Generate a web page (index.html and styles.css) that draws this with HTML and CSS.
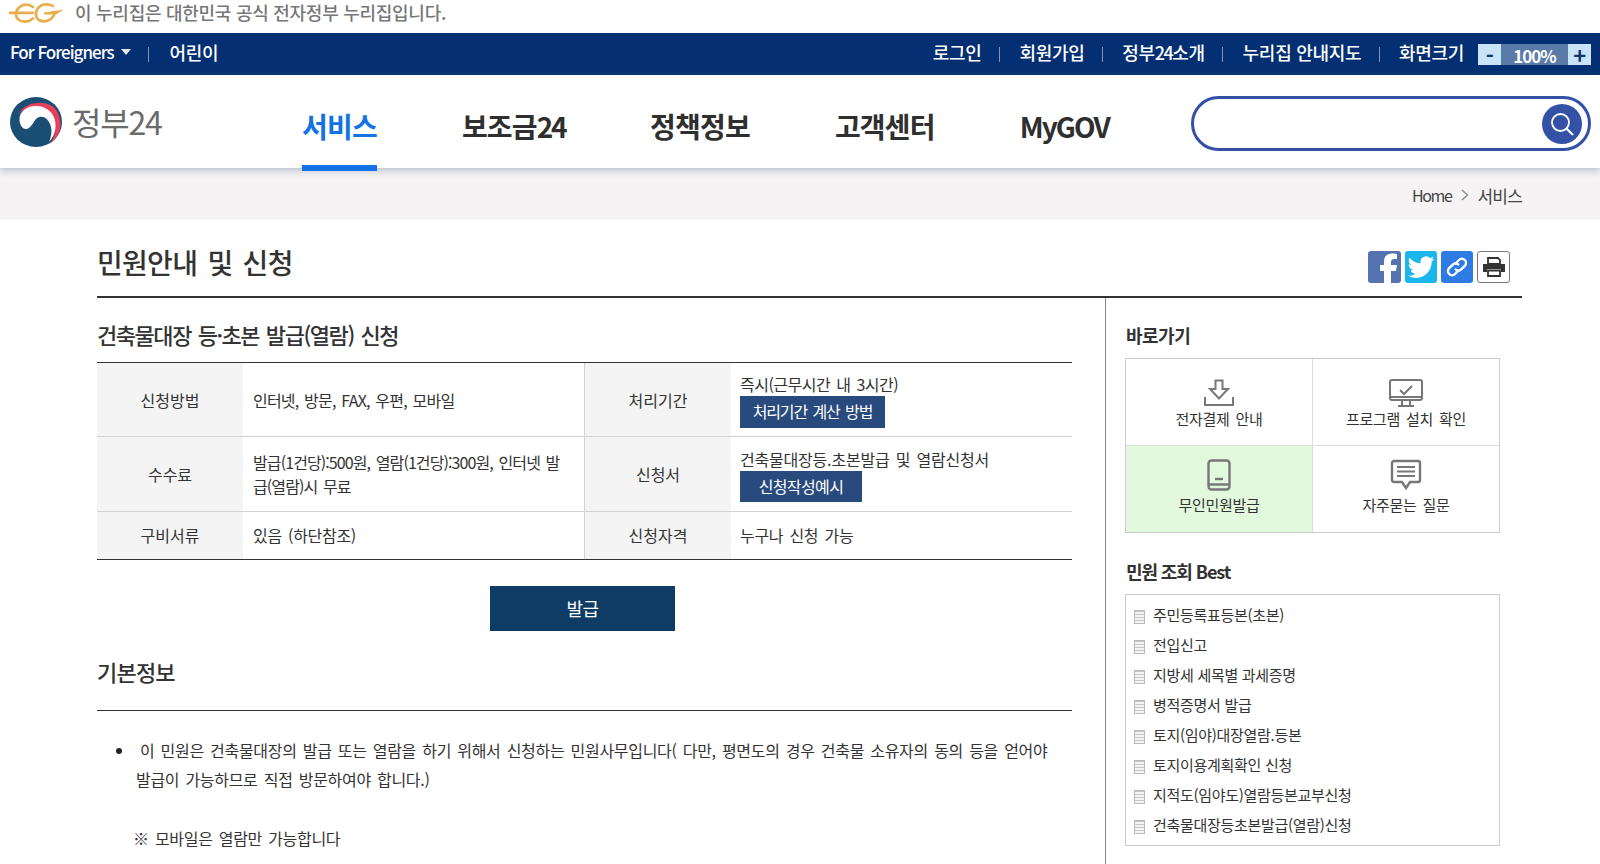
FILE: index.html
```html
<!DOCTYPE html>
<html lang="ko">
<head>
<meta charset="utf-8">
<title>정부24</title>
<link rel="stylesheet" href="styles.css">
</head>
<body>
<div class="gov-strip">
  <svg class="eg-logo" viewBox="0 0 64 24" width="64" height="24" aria-label="eG"><g fill="none" stroke="#e9ae4e" stroke-width="2.700" stroke-linecap="round"><path d="M10 12.800H33"/><path d="M33 7C29 3.800 23 3.800 19 7.500C15 11.500 15 17 19 20C23 22.800 29 22 33 18.500"/><path d="M53 6C48 3.500 42 3.800 38.500 7.500C35 11.500 35 17.500 39 20C44 22.800 51 21 54 15"/></g><path d="M44 12.500L64 9.500L56 14.500H44Z" fill="#e9ae4e"/></svg>
  <span>이 누리집은 대한민국 공식 전자정부 누리집입니다.</span>
</div>
<div class="utility">
  <div class="util-left">
    <span class="util-item foreign">For Foreigners <i class="caret"></i></span>
    <span class="util-sep"></span>
    <span class="util-item kid">어린이</span>
  </div>
  <div class="util-right">
    <span class="util-item">로그인</span><span class="util-sep"></span>
    <span class="util-item">회원가입</span><span class="util-sep"></span>
    <span class="util-item">정부<span class="digits">24</span>소개</span><span class="util-sep"></span>
    <span class="util-item">누리집 안내지도</span><span class="util-sep"></span>
    <span class="util-item">화면크기</span>
    <div class="zoomer"><b class="zb">-</b><span class="zv">100%</span><b class="zb">+</b></div>
  </div>
</div>
<header class="masthead">
  <div class="brand">
    <svg width="52" height="50" viewBox="0 0 52 50"><ellipse cx="26" cy="25" rx="26" ry="25" fill="#1b4e74"/><path d="M8 17C14 7 30 2 42 9C50 14 53.500 30 47.500 38C45.500 42 42.500 45 40 46.500C47 38 46 24 38 15C30 8 16 9 8 17Z" fill="#e83f5b"/><path d="M9.500 23C9 13 19 8.500 27 9C39 9.500 46.500 19 45.500 30C45 36 42.500 41.500 39 45C42 38 42.500 31 39 25C36 19.500 30 18 26 22C23 26 20 32 16 32C12 32 9.500 27 9.500 23Z" fill="#fff"/></svg>
    <span class="brand-name">정부24</span>
  </div>
  <nav class="gnb">
    <a class="gnb-item on">서비스</a>
    <a class="gnb-item">보조금<span class="digits">24</span></a>
    <a class="gnb-item">정책정보</a>
    <a class="gnb-item">고객센터</a>
    <a class="gnb-item latin">MyGOV</a>
  </nav>
  <div class="search">
    <span class="search-btn"><svg width="26" height="26" viewBox="0 0 26 26"><circle cx="11.500" cy="11.500" r="8.500" fill="none" stroke="#fff" stroke-width="1.800"/><path d="M17.500 17.500L24 24" stroke="#fff" stroke-width="2.200"/></svg></span>
  </div>
</header>
<div class="crumbs"><span class="home">Home</span><svg width="8" height="12" viewBox="0 0 8 12"><path d="M1 1L6.500 6L1 11" fill="none" stroke="#888" stroke-width="1.300"/></svg><span class="here">서비스</span></div>
<main class="page">
  <div class="title-row">
    <h1>민원안내 및 신청</h1>
    <div class="shares">
      <span class="share fb"><svg width="33" height="33" viewBox="0 0 33 33"><path d="M23 33V20H28L29 14H23V11C23 9 24 8 26 8H29V3C27 2.600 25 2.600 24 2.600C19 2.600 16 5.500 16 10V14H12V20H16V33Z" fill="#fff"/></svg></span>
      <span class="share tw"><svg width="32" height="32" viewBox="0 0 24 24"><path d="M22 6a8 8 0 0 1-2.400.7 4.100 4.100 0 0 0 1.800-2.300 8 8 0 0 1-2.600 1 4.100 4.100 0 0 0-7 3.800A11.600 11.600 0 0 1 3.400 5a4.100 4.100 0 0 0 1.300 5.500 4 4 0 0 1-1.900-.5 4.100 4.100 0 0 0 3.300 4.100 4 4 0 0 1-1.900.1 4.100 4.100 0 0 0 3.800 2.800A8.200 8.200 0 0 1 2 18.400 11.600 11.600 0 0 0 8.300 20.200c7.500 0 11.700-6.300 11.700-11.700v-.5A8.400 8.400 0 0 0 22 6z" fill="#fff"/></svg></span>
      <span class="share ln"><svg width="32" height="32" viewBox="0 0 32 32"><g fill="none" stroke="#fff" stroke-width="2.400" stroke-linecap="round"><path d="M14.500 12.500L18 9a4 4 0 0 1 5.800 5.800l-3.600 3.600a4 4 0 0 1-5.400.2"/><path d="M17.500 19.500L14 23a4 4 0 0 1-5.800-5.800l3.600-3.600a4 4 0 0 1 5.400-.2"/></g></svg></span>
      <span class="share pr"><svg width="22" height="20" viewBox="0 0 22 20"><path d="M5 1H15L17 3V7H5Z" fill="none" stroke="#333" stroke-width="1.800"/><path d="M0 7H22V15H18V12H4V15H0Z" fill="#333"/><path d="M5 13.500H17V19H5Z" fill="none" stroke="#333" stroke-width="1.800"/></svg></span>
    </div>
  </div>
  <div class="columns">
    <section class="content">
      <h2>건축물대장 등·초본 발급(열람) 신청</h2>
      <div class="info">
        <div class="th r1">신청방법</div>
        <div class="td r1 tight">인터넷, 방문, FAX, 우편, 모바일</div>
        <div class="th r1 mid">처리기간</div>
        <div class="td r1 stack"><span class="tight">즉시(근무시간 내 3시간)</span><a class="mini wide">처리기간 계산 방법</a></div>
        <div class="th r2">수수료</div>
        <div class="td r2 tighter">발급(1건당):500원, 열람(1건당):300원, 인터넷 발급(열람)시 무료</div>
        <div class="th r2 mid">신청서</div>
        <div class="td r2 stack"><span class="loose">건축물대장등.초본발급 및 열람신청서</span><a class="mini">신청작성예시</a></div>
        <div class="th r3">구비서류</div>
        <div class="td r3">있음 (하단참조)</div>
        <div class="th r3 mid">신청자격</div>
        <div class="td r3">누구나 신청 가능</div>
      </div>
      <div class="cta-row"><a class="cta">발급</a></div>
      <h3>기본정보</h3>
      <ul class="desc">
        <li>이 민원은 건축물대장의 발급 또는 열람을 하기 위해서 신청하는 민원사무입니다( 다만, 평면도의 경우 건축물 소유자의 동의 등을 얻어야 발급이 가능하므로 직접 방문하여야 합니다.)</li>
      </ul>
      <p class="note">※ 모바일은 열람만 가능합니다</p>
    </section>
    <aside class="side">
      <h4>바로가기</h4>
      <div class="quick">
        <div class="qcell"><svg width="32" height="28" viewBox="0 0 32 28"><g fill="none" stroke="#777" stroke-width="2"><path d="M12.500 1.500H19.500V10H25L16 19.500L7 10H12.500Z"/><path d="M2 18V26H30V18"/></g></svg><span>전자결제 안내</span></div>
        <div class="qcell"><svg width="34" height="28" viewBox="0 0 34 28"><g fill="none" stroke="#777" stroke-width="2"><rect x="1" y="1" width="32" height="20" rx="2"/><path d="M11 11L15 15L23 7"/><path d="M1 18H33M13 21V26M21 21V26M9 27H25"/></g></svg><span>프로그램 설치 확인</span></div>
        <div class="qcell green"><svg width="24" height="32" viewBox="0 0 24 32"><g fill="none" stroke="#777" stroke-width="2.400"><rect x="1.500" y="1.500" width="21" height="29" rx="3"/><path d="M1.500 25.500H22.500"/><path d="M8 20H16"/></g></svg><span>무인민원발급</span></div>
        <div class="qcell"><svg width="32" height="32" viewBox="0 0 32 32"><g fill="none" stroke="#777"><path d="M4 2H28A2 2 0 0 1 30 4V21A2 2 0 0 1 28 23H20L16 29L12 23H4A2 2 0 0 1 2 21V4A2 2 0 0 1 4 2Z" stroke-width="2.400"/><path d="M7 8H25M7 12.500H25M7 17H25" stroke-width="2"/></g></svg><span>자주묻는 질문</span></div>
      </div>
      <h4 class="best">민원 조회 Best</h4>
      <ul class="best-list">
        <li>주민등록표등본(초본)</li>
        <li>전입신고</li>
        <li>지방세 세목별 과세증명</li>
        <li>병적증명서 발급</li>
        <li>토지(임야)대장열람.등본</li>
        <li>토지이용계획확인 신청</li>
        <li>지적도(임야도)열람등본교부신청</li>
        <li>건축물대장등초본발급(열람)신청</li>
      </ul>
    </aside>
  </div>
</main>
</body>
</html>
```
FILE: styles.css
```css
* { box-sizing: border-box; }
html, body { margin: 0; height: 864px; overflow: hidden; }
body { font-family: "Noto Sans CJK KR", "Noto Sans", sans-serif; color: #333; background: #fff; letter-spacing: -0.5px; }
a { color: inherit; text-decoration: none; }
h1, h2, h3, h4, p, ul { margin: 0; padding: 0; }
ul { list-style: none; }

.gov-strip { height: 33px; display: flex; align-items: flex-start; gap: 11px; font-size: 18px; line-height: 24px; color: #777; font-weight: 500; letter-spacing: -0.27px; }
.eg-logo { flex: none; }

.utility { height: 42px; background: #042f72; display: flex; justify-content: space-between; align-items: center; padding: 0 9px 0 10px; color: #fff; }
.util-left, .util-right { display: flex; align-items: center; }
.util-item { font-size: 18px; line-height: 24px; font-weight: 500; letter-spacing: -0.3px; white-space: nowrap; margin-top: -4px; }
.digits { letter-spacing: -1.5px; }
.util-sep { width: 1px; height: 15px; background: #7d93b8; margin: 0 19.4px 0 17.4px; }
.foreign { font-size: 17px; letter-spacing: -1px; display: flex; align-items: center; gap: 7px; }
.kid { margin-left: 1px; }
.caret { width: 0; height: 0; border: 5px solid transparent; border-top: 6px solid #e3e8f0; border-bottom: 0; }
.zoomer { display: flex; height: 21px; width: 113px; margin-left: 14px; background: #5a7aa8; }
.zb { width: 23px; background: #c9e4f7; color: #12366f; font-size: 22px; line-height: 20px; text-align: center; font-weight: 700; }
.zv { flex: 1; text-align: center; font-size: 17px; line-height: 23px; font-weight: 700; letter-spacing: -1px; }

.masthead { height: 93px; display: flex; align-items: flex-start; position: relative; padding-left: 10px; box-shadow: 0 2px 8px rgba(90,110,150,.45); z-index: 2; background: #fff; }
.brand { display: flex; align-items: center; gap: 10px; width: 292px; height: 50px; margin-top: 22px; flex: none; }
.brand-name { font-size: 32px; line-height: 44px; color: #6b6b6b; letter-spacing: -1.2px; font-weight: 400; margin-top: -2px; }
.gnb { display: flex; gap: 85px; flex: none; width: 889px; }
.gnb-item { font-size: 28px; line-height: 36px; font-weight: 700; padding: 33px 0 0; height: 96px; color: #2f2f2f; letter-spacing: -0.8px; white-space: nowrap; }
.gnb-item .digits { letter-spacing: -2.4px; }
.gnb-item.latin { letter-spacing: -1.9px; }
.gnb-item.on { color: #1272e6; border-bottom: 6px solid #1272e6; }
.search { width: 400px; height: 55px; margin-top: 21px; border: 3px solid #3352a5; border-radius: 28px; display: flex; justify-content: flex-end; align-items: center; padding-right: 6px; flex: none; }
.search-btn { width: 40px; height: 40px; border-radius: 50%; background: #3352a5; display: flex; align-items: center; justify-content: center; }

.crumbs { height: 51px; background: #f5f3f3; border-bottom: 1px solid #ececec; display: flex; align-items: center; justify-content: flex-end; gap: 8px; padding: 4px 78px 0 0; font-size: 16px; letter-spacing: -0.5px; color: #444; }
.home { letter-spacing: -1.4px; margin-right: 2px; }
.here { font-size: 17px; letter-spacing: -0.8px; }

.page { width: 1425px; margin-left: 97px; }
.title-row { height: 79px; border-bottom: 2px solid #333; display: flex; justify-content: space-between; align-items: flex-start; }
h1 { font-size: 28px; line-height: 40px; font-weight: 500; margin-top: 23px; color: #333; letter-spacing: -0.7px; word-spacing: 3px; }
.shares { display: flex; gap: 4px; margin-top: 32px; margin-right: 12px; }
.share { width: 32px; height: 32px; border-radius: 3px; display: flex; align-items: center; justify-content: center; overflow: hidden; }
.fb { background: #5573b1; width: 33px; }
.tw { background: #1bb7ec; }
.ln { background: #2f7be4; }
.pr { background: #fff; border: 1px solid #777; width: 33px; }

.columns { display: flex; align-items: flex-start; height: 600px; }
.content { width: 975px; flex: none; }
h2 { font-size: 22px; line-height: 30px; font-weight: 500; margin-top: 21px; color: #333; letter-spacing: -1.45px; word-spacing: 2px; }
.info { margin-top: 13px; border-top: 1px solid #333; border-bottom: 1px solid #333; display: grid; grid-template-columns: 146px 341px 147px 341px; grid-template-rows: 74px 75px 47px; font-size: 16px; line-height: 24px; }
.th, .td { display: flex; align-items: center; border-bottom: 1px solid #d2d2d2; }
.r3 { border-bottom: 0; padding-bottom: 2px; }
.th { background: #f4f4f4; justify-content: center; letter-spacing: 0; }
.th.mid { border-left: 1px solid #d2d2d2; }
.td { padding-left: 10px; padding-right: 4px; letter-spacing: -0.3px; word-spacing: 2px; }
.th.mid + .td { padding-left: 9px; }
.td.tight { letter-spacing: -0.8px; }
.td .tight { letter-spacing: -0.5px; }
.td .loose { letter-spacing: -0.2px; }
.td.tighter { letter-spacing: -0.9px; padding-right: 22px; }
.stack { flex-direction: column; align-items: flex-start; justify-content: center; }
.mini { display: block; background: #294a7d; color: #fff; height: 31px; line-height: 30px; text-align: center; width: 122px; letter-spacing: -0.6px; }
.mini.wide { width: 145px; height: 32px; letter-spacing: -1.1px; }

.cta-row { display: flex; justify-content: center; margin-top: 26px; padding-right: 4px; }
.cta { width: 185px; height: 45px; background: #0f3c64; color: #fff; font-size: 18px; line-height: 44px; text-align: center; }
h3 { font-size: 22px; line-height: 30px; font-weight: 500; margin-top: 25px; height: 55px; border-bottom: 1px solid #333; letter-spacing: -0.8px; }
.desc { margin-top: 25px; padding-left: 39px; padding-right: 20px; font-size: 16px; line-height: 29px; letter-spacing: -0.3px; word-spacing: 2px; text-indent: 4px; }
.desc li { position: relative; }
.desc li::before { content: ""; position: absolute; left: -20px; top: 12px; width: 6px; height: 6px; border-radius: 50%; background: #222; }
.note { margin-top: 30px; padding-left: 36px; font-size: 16px; line-height: 29px; letter-spacing: -0.3px; word-spacing: 2px; }

.side { width: 417px; height: 100%; border-left: 1px solid #888; margin-left: 33px; padding-left: 19px; }
h4 { font-size: 18px; line-height: 24px; font-weight: 700; margin-top: 25px; letter-spacing: -0.5px; color: #333; margin-left: 1px; }
.quick { margin-top: 11px; width: 375px; display: grid; grid-template-columns: 187px 186px; grid-template-rows: 87px 86px; border: 1px solid #ccc; }
.qcell { display: flex; flex-direction: column; align-items: center; justify-content: flex-end; font-size: 15px; line-height: 22px; padding-bottom: 15px; gap: 1px; border-bottom: 1px solid #ddd; border-right: 1px solid #ddd; letter-spacing: -0.3px; word-spacing: 2px; }
.qcell:nth-child(2n) { border-right: 0; }
.qcell:nth-child(n+3) { border-bottom: 0; padding-bottom: 16px; gap: 3px; }
.green { background: #e2f9de; }
h4.best { margin-top: 26px; letter-spacing: -1.1px; }
.best-list { margin-top: 11px; width: 375px; height: 252px; border: 1px solid #ccc; padding: 5px 0 0 27px; font-size: 15px; line-height: 30px; letter-spacing: -0.3px; }
.best-list li { position: relative; }
.best-list li::before { content: ""; position: absolute; left: -19px; top: 10px; width: 9px; height: 12px; border: 1px solid #b9b9b9; background: repeating-linear-gradient(#c6c6c6 0 1px, #f4f4f4 1px 3px); }
```
